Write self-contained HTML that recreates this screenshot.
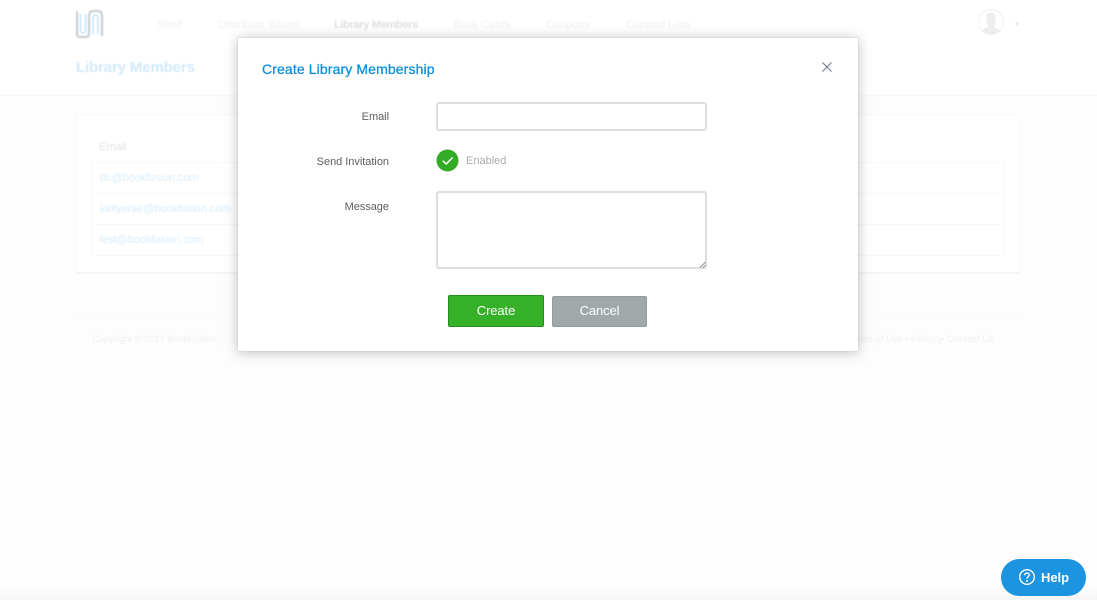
<!DOCTYPE html>
<html lang="en"><head><meta charset="utf-8"><title>Library Members</title>
<style>
html,body{margin:0;padding:0;width:1097px;height:600px;overflow:hidden;background:#fdfdfd;font-family:"Liberation Sans",sans-serif}
.a{position:absolute;white-space:nowrap}
#root{position:relative;width:1097px;height:600px;overflow:hidden;background:#fdfdfd}
.nav{top:18px;font-size:11px;line-height:14px;color:#f0f0f0;filter:blur(.4px)}
.row{left:91px;width:912px;height:30px;border:1px solid #f8f8f8;background:#fff}
.mail{left:100px;font-size:11px;line-height:14px;color:#d9edf9;letter-spacing:-.08px;filter:blur(.4px)}
.lab{font-size:11px;line-height:14px;color:#5c5e62;text-align:right;right:708px;letter-spacing:-.03px;filter:blur(.25px)}
.foot{font-size:9.500px;line-height:12px;color:#f0f0f0;top:334px;filter:blur(.3px)}
</style></head><body><div id="root">
<div class="a" style="left:0;top:0;width:1097px;height:95px;background:#fff;border-bottom:1px solid #f9f9f9"></div>
<svg class="a" style="left:74px;top:8px;filter:blur(.4px)" width="30" height="32" viewBox="0 0 30 32" fill="none">
<path d="M3 3V26Q3 29 6 29H12Q15 29 15 26V8Q15 3 20 3H23Q28 3 28 8V28" stroke="#ccd0d3" stroke-width="2.200"/>
<path d="M6.500 6V22Q6.500 25 9 25T11.500 22V6" stroke="#c5e4f7" stroke-width="1.500"/>
<path d="M19 26V11Q19 7 21.500 7T24 11V26" stroke="#c5e4f7" stroke-width="1.500"/>
</svg>
<div class="a nav" style="left:157px">Shelf</div>
<div class="a nav" style="left:218px;letter-spacing:.08px">Distribute Books</div>
<div class="a nav" style="left:334px;font-weight:bold;color:#e1e1e1;letter-spacing:-.32px">Library Members</div>
<div class="a nav" style="left:453px">Book Cards</div>
<div class="a nav" style="left:546px">Coupons</div>
<div class="a nav" style="left:626px;letter-spacing:-.05px">Curated Lists</div>
<svg class="a" style="left:977px;top:8px;filter:blur(.3px)" width="46" height="28" viewBox="0 0 46 28">
<circle cx="14" cy="14" r="12.500" fill="#fff" stroke="#f0f0f0"/>
<path d="M14 4.500C9.500 4.500 9 8 9.500 12C9.800 15 11 17 11 18.500C11 20 6 20.500 4.500 23C7 25.500 10.500 26.500 14 26.500S21 25.500 23.500 23C22 20.500 17 20 17 18.500C17 17 18.200 15 18.500 12C19 8 18.500 4.500 14 4.500Z" fill="#ededed"/>
<path d="M38 14.500H42.500L40.250 18.500Z" fill="#e8e8e8"/>
</svg>
<div class="a" style="left:76px;top:58px;font-size:15px;line-height:19px;font-weight:bold;color:#d3eafa;letter-spacing:-.14px;filter:blur(.4px)">Library Members</div>
<div class="a" style="left:76px;top:114px;width:943px;height:157px;background:#fff;border:1px solid #f9f9f9;border-bottom:2px solid #f6f6f6"></div>
<div class="a" style="left:99px;top:140px;font-size:11px;line-height:14px;color:#e2e2e2;filter:blur(.4px)">Email</div>
<div class="a row" style="top:162px"></div>
<div class="a row" style="top:193px"></div>
<div class="a row" style="top:224px"></div>
<div class="a mail" style="top:171px">dc@bookfusion.com</div>
<div class="a mail" style="top:202px">kellyerae@bookfusion.com</div>
<div class="a mail" style="top:233px">lest@bookfusion.com</div>
<div class="a" style="left:76px;top:313px;width:943px;height:1px;background:#f9f9f9"></div>
<div class="a foot" style="left:92px;letter-spacing:-.1px">Copyright © 2017 BookFusion</div>
<div class="a foot" style="right:194px">Terms of Use</div>
<div class="a foot" style="left:905px">•</div>
<div class="a foot" style="left:911px;letter-spacing:.1px">Privacy</div>
<div class="a foot" style="left:941px">•</div>
<div class="a foot" style="left:947px">Contact Us</div>
<div class="a" style="left:0;top:585px;width:1097px;height:15px;background:linear-gradient(#fdfdfd,#f6f6f6)"></div>

<div class="a" style="left:238px;top:38px;width:620px;height:313px;background:#fff;box-shadow:0 0 1px #b5bac0,0 1px 12px rgba(90,100,110,.42)"></div>
<div class="a" style="left:262px;top:60px;font-size:14px;line-height:18px;color:#0f8fdc;letter-spacing:.12px;-webkit-text-stroke:.3px #0f8fdc;filter:blur(.2px)">Create Library Membership</div>
<svg class="a" style="left:821px;top:61px" width="12" height="12" viewBox="0 0 12 12"><path d="M1.500 1.500L10.500 10.500M10.500 1.500L1.500 10.500" stroke="#6f7f8f" stroke-width="1.100" fill="none"/></svg>
<div class="a lab" style="top:110px">Email</div>
<div class="a" style="left:436px;top:102px;width:267px;height:25px;border:2px solid #dcdedf;border-radius:3px;background:#fff"></div>
<div class="a lab" style="top:155px">Send Invitation</div>
<svg class="a" style="left:436px;top:149px" width="23" height="23" viewBox="0 0 23 23"><circle cx="11.500" cy="11.500" r="11" fill="#33ab26"/><path d="M6.800 11.800L10.200 15L16.500 8.500" stroke="#fff" stroke-width="1.500" fill="none"/></svg>
<div class="a" style="left:466px;top:154px;font-size:11px;line-height:14px;color:#a9acae;filter:blur(.25px)">Enabled</div>
<div class="a lab" style="top:200px">Message</div>
<div class="a" style="left:436px;top:191px;width:267px;height:74px;border:2px solid #dcdedf;border-radius:3px;background:#fff"></div>
<svg class="a" style="left:699px;top:261px" width="7" height="7" viewBox="0 0 7 7"><path d="M1 6.500L6.500 1M4 6.500L6.500 4" stroke="#777" stroke-width=".8" fill="none"/></svg>
<div class="a" style="left:448px;top:295px;width:94px;height:30px;background:#35b028;border:1px solid #1e8f17;border-radius:2px;color:#fff;font-size:13px;line-height:30px;text-align:center;letter-spacing:-.1px">Create</div>
<div class="a" style="left:552px;top:296px;width:93px;height:29px;background:#a1a8aa;border:1px solid #959c9f;border-radius:2px;color:#fff;font-size:13px;line-height:28px;text-align:center;letter-spacing:-.1px">Cancel</div>

<div class="a" style="left:1001px;top:559px;width:85px;height:37px;border-radius:19px;background:#1c94df"></div>
<svg class="a" style="left:1018px;top:568px" width="18" height="18" viewBox="0 0 18 18"><circle cx="9" cy="9" r="7.300" fill="none" stroke="#fff" stroke-width="1.400"/><path d="M6.700 7.200C6.700 5.900 7.700 5.100 9 5.100S11.300 5.900 11.300 7.100C11.300 8.700 9 8.800 9 10.600" fill="none" stroke="#fff" stroke-width="1.400"/><circle cx="9" cy="12.900" r="1" fill="#fff"/></svg>
<div class="a" style="left:1041px;top:570px;font-size:13px;line-height:16px;font-weight:bold;color:#fff;letter-spacing:-.05px">Help</div>
</div></body></html>
